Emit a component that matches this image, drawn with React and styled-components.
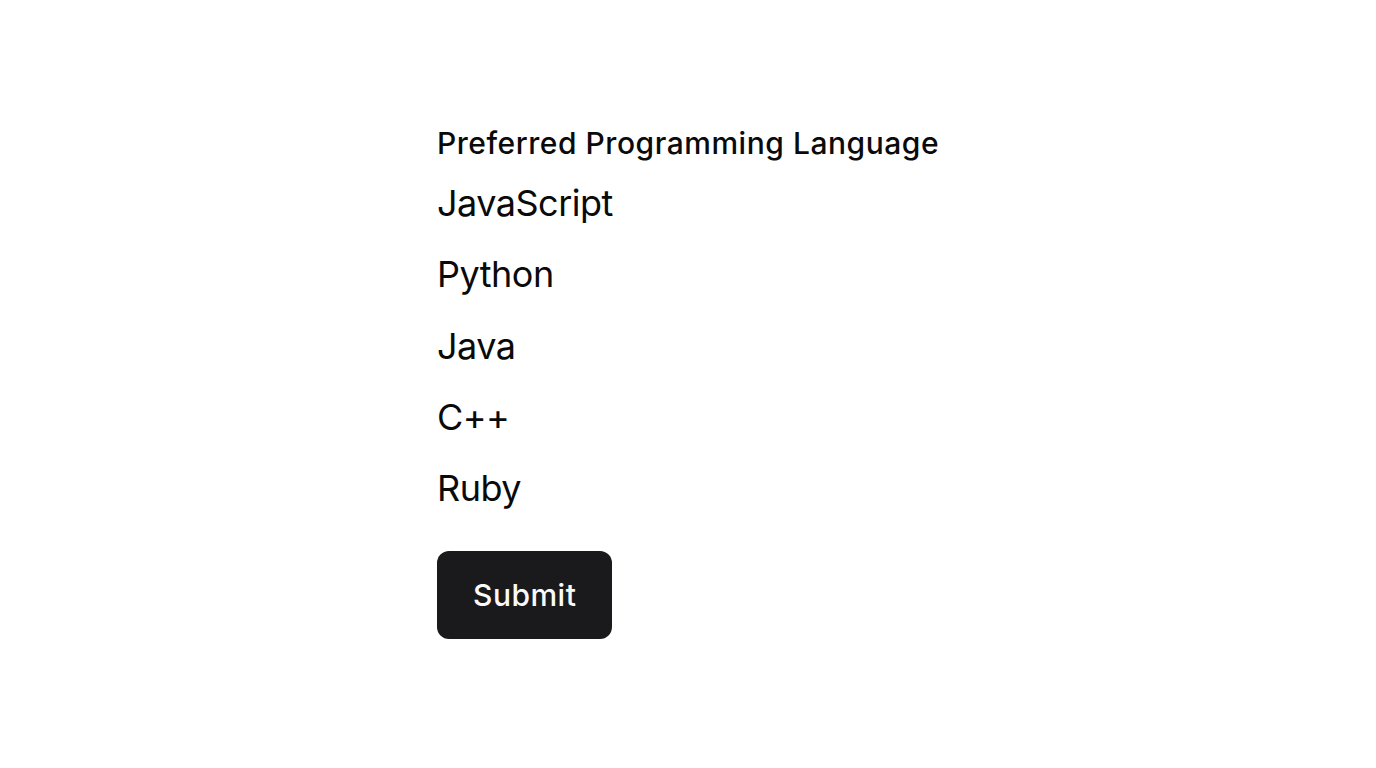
import React from "react";
import styled, { createGlobalStyle } from "styled-components";

const Global = createGlobalStyle`
  html, body { margin: 0; padding: 0; background: #ffffff; }
  body { font-family: Inter, "Noto Sans", sans-serif; color: #0a0a0a; }
`;

const Page = styled.div`
  min-height: 768px;
  display: flex;
  justify-content: center;
  padding-top: 120.6px;
  box-sizing: border-box;
`;

const Form = styled.form`
  width: 502px;
  display: flex;
  flex-direction: column;
  align-items: flex-start;
`;

const Heading = styled.h2`
  margin: 0;
  font-size: 30px;
  line-height: 45px;
  font-weight: 500;
  letter-spacing: 0.53px;
  white-space: nowrap;
  color: #0a0a0a;
`;

const List = styled.div`
  display: flex;
  flex-direction: column;
  gap: 17.3px;
  margin-top: 10.5px;
`;

const Option = styled.div`
  font-size: 36px;
  line-height: 54px;
  font-weight: 400;
  letter-spacing: -0.5px;
  color: #0a0a0a;
`;

const Button = styled.button`
  margin-top: 36px;
  font-family: Inter, "Noto Sans", sans-serif;
  font-size: 30px;
  line-height: 45px;
  font-weight: 500;
  letter-spacing: 0.5px;
  color: #fafafa;
  background: #1a1a1c;
  border: none;
  border-radius: 12px;
  padding: 21.5px 36px;
  cursor: pointer;
`;

const languages = ["JavaScript", "Python", "Java", "C++", "Ruby"];

export default function App() {
  return (
    <>
      <Global />
      <Page>
        <Form onSubmit={(e) => e.preventDefault()}>
          <Heading>Preferred Programming Language</Heading>
          <List>
            {languages.map((l) => (
              <Option key={l}>{l}</Option>
            ))}
          </List>
          <Button type="submit">Submit</Button>
        </Form>
      </Page>
    </>
  );
}
